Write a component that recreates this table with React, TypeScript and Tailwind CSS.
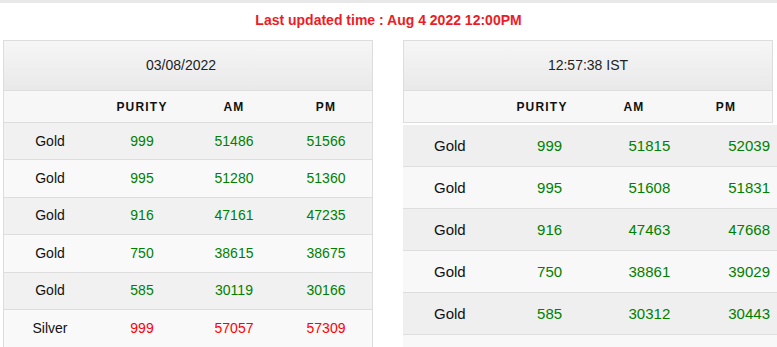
const LEFT = [
  { metal: "Gold", purity: "999", am: "51486", pm: "51566", tone: "text-[#008000]" },
  { metal: "Gold", purity: "995", am: "51280", pm: "51360", tone: "text-[#008000]" },
  { metal: "Gold", purity: "916", am: "47161", pm: "47235", tone: "text-[#008000]" },
  { metal: "Gold", purity: "750", am: "38615", pm: "38675", tone: "text-[#008000]" },
  { metal: "Gold", purity: "585", am: "30119", pm: "30166", tone: "text-[#008000]" },
  { metal: "Silver", purity: "999", am: "57057", pm: "57309", tone: "text-[#ff0000]" },
];

const RIGHT = [
  { metal: "Gold", purity: "999", am: "51815", pm: "52039" },
  { metal: "Gold", purity: "995", am: "51608", pm: "51831" },
  { metal: "Gold", purity: "916", am: "47463", pm: "47668" },
  { metal: "Gold", purity: "750", am: "38861", pm: "39029" },
  { metal: "Gold", purity: "585", am: "30312", pm: "30443" },
  { metal: "", purity: "", am: "", pm: "" },
];

function TableHead({ title, offset }: { title: string; offset?: boolean }) {
  return (
    <>
      <div
        className={`h-[50px] flex items-center justify-center border-b border-[#dddddd] bg-gradient-to-b from-[#f6f6f6] to-[#e9e9e9] text-[14px] text-[#222] ${offset ? "pr-[14px]" : ""}`}
      >
        {title}
      </div>
      <div className="h-[32px] grid grid-cols-4 items-center border-b border-[#dddddd] bg-[#f7f7f7] text-[12px] font-bold tracking-[1.2px] text-[#111] text-center">
        <span />
        <span>PURITY</span>
        <span>AM</span>
        <span>PM</span>
      </div>
    </>
  );
}

export default function App() {
  return (
    <div className="w-[777px] h-[347px] overflow-hidden bg-white font-['Liberation_Sans',Arial,sans-serif]">
      <div className="h-[3px] bg-[#e8e8e8]" />
      <div className="h-[37px] pt-[10px] text-center text-[14px] leading-[15px] font-bold text-[#ed1c24]">
        Last updated time : Aug 4 2022 12:00PM
      </div>

      <div className="flex gap-[30px] pl-[3px]">
        {/* Left: fixed rates */}
        <div className="w-[370px] border border-[#dddddd] shrink-0">
          <TableHead title="03/08/2022" offset />
          {LEFT.map((r, i) => (
            <div
              key={i}
              className={`h-[37.4px] grid grid-cols-4 items-center text-center text-[14px] ${i < LEFT.length - 1 ? "border-b border-[#dddddd]" : ""} ${i % 2 === 0 ? "bg-[#f1f1f1]" : "bg-[#f9f9f9]"}`}
            >
              <span className="text-[#111]">{r.metal}</span>
              <span className={r.tone}>{r.purity}</span>
              <span className={r.tone}>{r.am}</span>
              <span className={r.tone}>{r.pm}</span>
            </div>
          ))}
        </div>

        {/* Right: live rates */}
        <div className="w-[370px] shrink-0">
          <div className="border border-[#dddddd] border-b-0">
            <TableHead title="12:57:38 IST" />
          </div>
          <div className="w-[400px] mt-[2px]">
            {RIGHT.map((r, i) => (
              <div
                key={i}
                className={`h-[42px] pt-[2px] border-b border-[#dedede] ${i % 2 === 0 ? "bg-[#efefef]" : "bg-[#f8f8f8]"}`}
              >
                <div className="w-[399px] -ml-[3px] h-full grid grid-cols-4 items-center text-center text-[15px]">
                  <span className="text-[#111]">{r.metal}</span>
                  <span className="text-[#008000]">{r.purity}</span>
                  <span className="text-[#008000]">{r.am}</span>
                  <span className="text-[#008000]">{r.pm}</span>
                </div>
              </div>
            ))}
          </div>
        </div>
      </div>
    </div>
  );
}
